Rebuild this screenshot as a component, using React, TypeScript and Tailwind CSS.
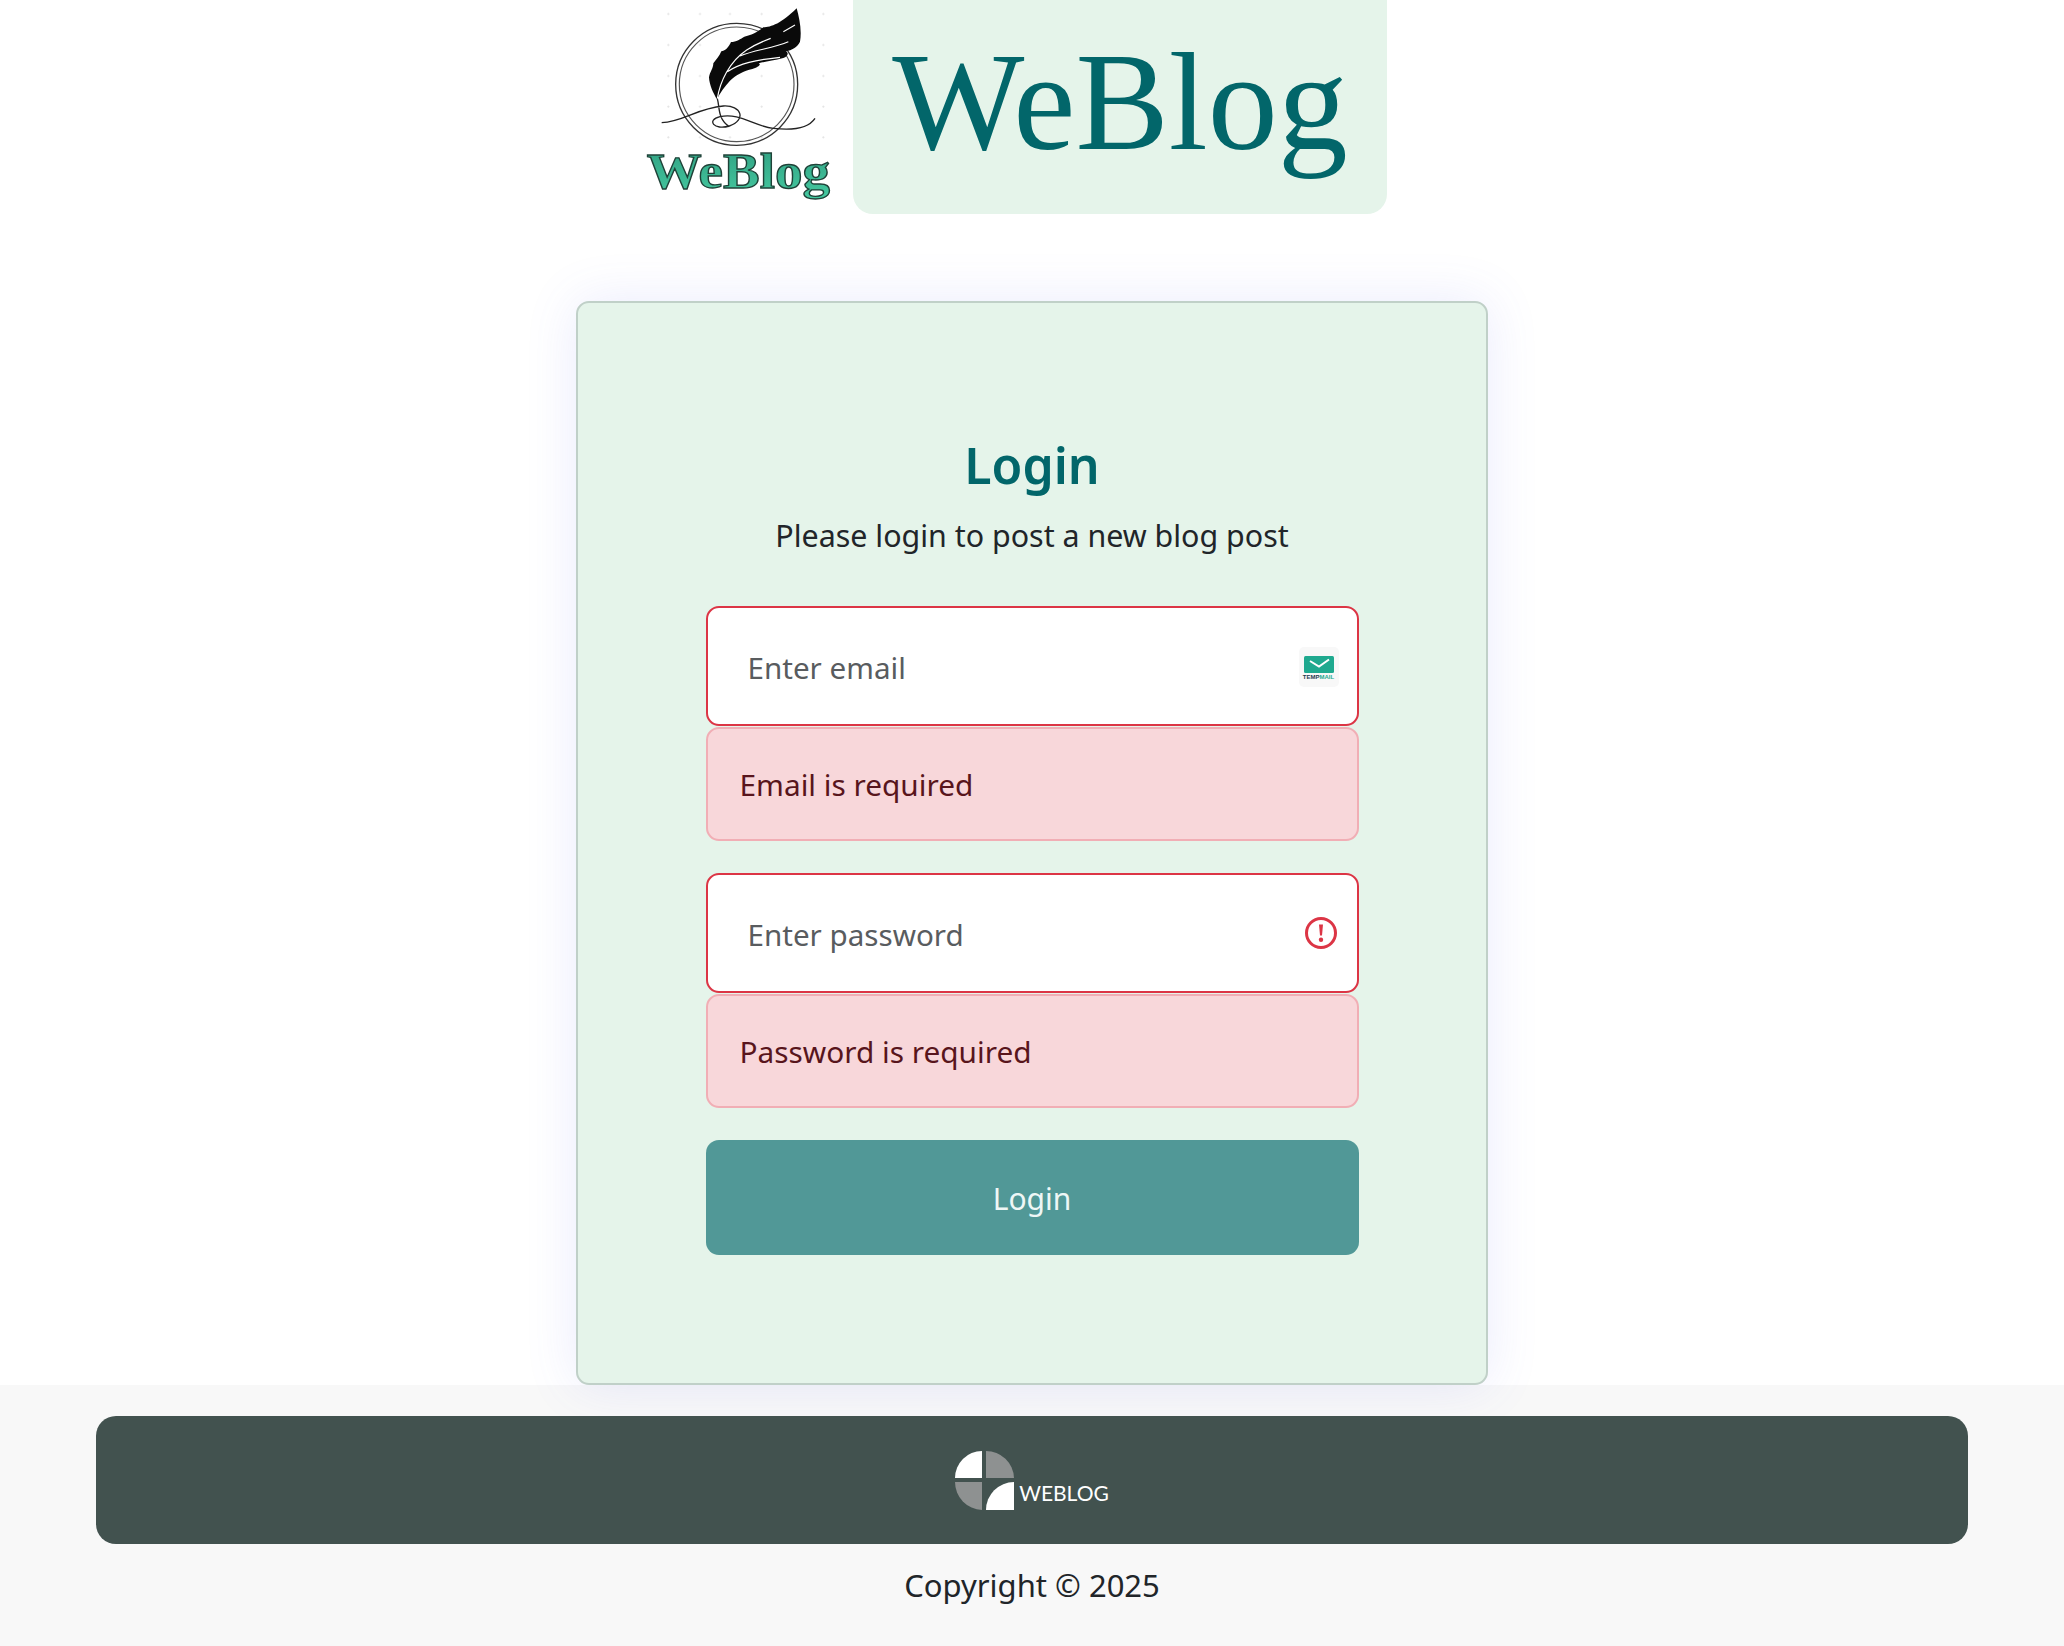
const FONT = "font-['Noto_Sans','Open_Sans',sans-serif]";

function FeatherLogo() {
  const dotsX = [85, 180, 270, 365, 550];
  const dotsY = [42, 135, 228, 320, 412];
  return (
    <svg width="213" height="210" viewBox="0 0 639 630" className="shrink-0">
      <defs>
        <linearGradient id="green" x1="0" y1="0" x2="0" y2="1">
          <stop offset="0" stopColor="#2f9e80" />
          <stop offset="1" stopColor="#45c9a0" />
        </linearGradient>
      </defs>
      {dotsX.map((x) =>
        dotsY.map((y) => (
          <g key={`${x}-${y}`} stroke="#d9d9d9" strokeWidth="1.5">
            <path d={`M${x - 4} ${y}H${x + 4}M${x} ${y - 4}V${y + 4}`} />
          </g>
        )),
      )}
      <circle cx="290" cy="253" r="183" fill="none" stroke="#333" strokeWidth="4" />
      <circle cx="290" cy="253" r="172" fill="none" stroke="#555" strokeWidth="3.5" />
      <path
        d="M470 25 C478 55 486 90 480 125 C472 142 455 150 438 154 C448 160 442 170 430 174 C400 182 378 184 356 190 C366 194 352 202 337 207 C312 212 287 226 270 242 C254 260 240 278 231 298 C220 280 208 255 207 232 C210 215 220 205 220 190 C228 178 238 170 244 154 C254 153 266 143 273 126 C288 126 303 116 313 110 C333 106 350 98 370 82 C393 82 425 70 470 25 Z"
        fill="#0a0a0a"
      />
      <path
        d="M232 296 C240 245 268 185 320 150 C345 134 368 124 392 115 M262 215 C300 190 345 180 420 172 M300 168 C340 150 400 145 445 125 M430 95 L465 75"
        fill="none"
        stroke="#fff"
        strokeWidth="3.5"
      />
      <path
        d="M65 368 C130 365 170 325 250 318 C305 315 320 360 268 378 C222 392 198 360 240 350 C300 338 340 378 400 385 C460 392 505 385 525 355 M232 296 C240 325 232 355 268 380"
        fill="none"
        stroke="#222"
        strokeWidth="4"
      />
      <text
        x="20"
        y="565"
        textLength="550"
        lengthAdjust="spacingAndGlyphs"
        fontFamily="'Liberation Serif', serif"
        fontWeight="700"
        fontSize="155"
        fill="url(#green)"
        stroke="#1f4238"
        strokeWidth="4"
      >
        WeBlog
      </text>
    </svg>
  );
}

function TempMailIcon() {
  return (
    <div className="absolute right-[18px] top-[39px] flex h-[40px] w-[40px] flex-col items-center rounded-[5px] bg-[#f8f8f8] pt-[9px]">
      <svg width="30" height="17" viewBox="0 0 30 17">
        <rect width="30" height="17" rx="1.5" fill="#1fa98f" />
        <path d="M6 5 L15 10.5 L25 3.5" fill="none" stroke="#fff" strokeWidth="2" />
      </svg>
      <span className="mt-[1px] font-['Liberation_Sans',sans-serif] text-[6px] leading-[6px] font-bold text-[#1f3b4d]">
        TEMP<span className="text-[#1fa98f]">MAIL</span>
      </span>
    </div>
  );
}

function ErrorIcon() {
  return (
    <svg
      width="32"
      height="32"
      viewBox="0 0 32 32"
      className="absolute right-[20px] top-[42px]"
    >
      <circle cx="16" cy="16" r="14.5" fill="none" stroke="#dc3545" strokeWidth="3" />
      <path d="M14 7.5 H18 L17 18.5 H15 Z" fill="#dc3545" />
      <circle cx="16" cy="22.8" r="2.2" fill="#dc3545" />
    </svg>
  );
}

function Field({ placeholder, type, message, icon }: { placeholder: string; type: string; message: string; icon: React.ReactNode }) {
  return (
    <div className="w-full">
      <div className="relative h-[120px] w-full rounded-[13px] border-2 border-[#dc3545] bg-white">
        <input
          type={type}
          placeholder={placeholder}
          className="h-full w-full rounded-[13px] bg-transparent pr-[70px] pl-[40px] pt-[3px] text-[29.6px] text-[#212529] outline-none placeholder:text-[#595c5f]"
        />
        {icon}
      </div>
      <div className="mt-px flex h-[114px] w-full items-center rounded-[13px] border-2 border-[#f1aeb5] bg-[#f8d7da] pl-[32px] pt-[2px] text-[29.8px] text-[#58151c]">
        {message}
      </div>
    </div>
  );
}

export default function App() {
  return (
    <div className={`${FONT} min-h-[1646px] bg-white`}>
      <header className="flex h-[301px] justify-center pr-[37px]">
        <FeatherLogo />
        <div className="flex h-[214px] w-[534px] items-center justify-center rounded-b-[20px] bg-[#e5f4ea] pb-[11px] font-['Liberation_Serif',serif] text-[140px] leading-none text-[#02666a]">
          WeBlog
        </div>
      </header>

      <main className="flex justify-center">
        <div className="flex h-[1084px] w-[912px] flex-col items-center rounded-[13px] border-2 border-[#c0d0c8] bg-[#e5f4ea] pt-[128px] shadow-[0_0_52px_rgba(90,100,240,0.13)]">
          <h1 className="text-[50px] leading-[68px] font-semibold text-[#02666a]">Login</h1>
          <p className="mt-[16px] text-[30.4px] leading-[42px] text-[#212529]">Please login to post a new blog post</p>
          <div className="mt-[49px] flex w-[653px] flex-col gap-[32px]">
            <Field placeholder="Enter email" type="email" message="Email is required" icon={<TempMailIcon />} />
            <Field placeholder="Enter password" type="password" message="Password is required" icon={<ErrorIcon />} />
            <button className="h-[115px] w-full rounded-[13px] bg-[#519897] pt-[2px] text-[30px] text-[#eef7f6]">Login</button>
          </div>
        </div>
      </main>

      <footer className="flex h-[261px] flex-col items-center bg-[#f8f8f8] pt-[31px]">
        <div className="flex h-[128px] w-[1872px] items-center justify-center rounded-[20px] bg-[#42524f]">
          <div className="flex items-end">
            <svg width="59" height="59" viewBox="0 0 59 59">
              <path d="M27 0 V27 H0 A27 27 0 0 1 27 0 Z" fill="#fff" />
              <path d="M31 0 A28 28 0 0 1 59 27 H31 Z" fill="#8e9191" />
              <path d="M0 31 H27 V59 A28 28 0 0 1 0 31 Z" fill="#8e9191" />
              <path d="M59 31 V59 H31 A28 28 0 0 1 59 31 Z" fill="#fff" />
            </svg>
            <span className="mb-[5px] ml-[5px] font-['Lato',sans-serif] text-[21px] leading-[24px] text-white">WEBLOG</span>
          </div>
        </div>
        <p className="mt-[20px] text-[31px] leading-[42px] text-[#212529]">Copyright © 2025</p>
      </footer>
    </div>
  );
}
